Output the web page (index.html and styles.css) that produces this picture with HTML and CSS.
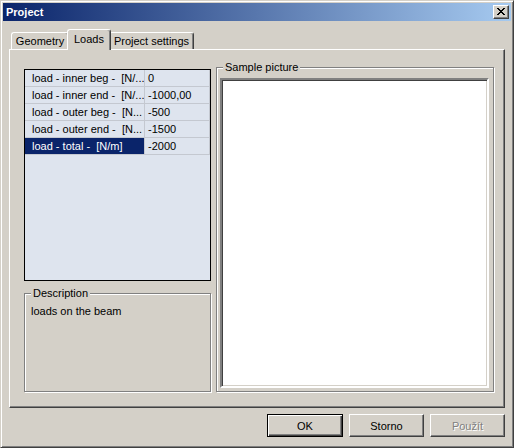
FILE: index.html
```html
<!DOCTYPE html>
<html>
<head>
<meta charset="utf-8">
<link rel="stylesheet" href="styles.css">
</head>
<body>
<div class="window">
  <div class="titlebar">
    <span class="title">Project</span>
    <div class="close">
      <svg width="8" height="7" viewBox="0 0 8 7" shape-rendering="crispEdges">
        <path fill="#000" d="M0 0h2v1H0zM6 0h2v1H6zM1 1h2v1H1zM5 1h2v1H5zM2 2h4v1H2zM3 3h2v1H3zM2 4h4v1H2zM1 5h2v1H1zM5 5h2v1H5zM0 6h2v1H0zM6 6h2v1H6z"/>
      </svg>
    </div>
  </div>
  <div class="body">
    <div class="tabs">
      <div class="tab t1">Geometry</div>
      <div class="tab t2 active">Loads</div>
      <div class="tab t3">Project settings</div>
    </div>
    <div class="panel">
      <div class="left">
        <div class="grid">
          <div class="row"><div class="name">load - inner beg -  [N/...</div><div class="val">0</div></div>
          <div class="row"><div class="name">load - inner end -  [N/...</div><div class="val">-1000,00</div></div>
          <div class="row"><div class="name">load - outer beg -  [N...</div><div class="val">-500</div></div>
          <div class="row"><div class="name">load - outer end -  [N...</div><div class="val">-1500</div></div>
          <div class="row sel"><div class="name">load - total -  [N/m]</div><div class="val">-2000</div></div>
        </div>
        <div class="group desc">
          <span class="legend">Description</span>
          <div class="desc-text">loads on the beam</div>
        </div>
      </div>
      <div class="group sample">
        <span class="legend">Sample picture</span>
        <div class="canvas"></div>
      </div>
    </div>
    <div class="buttons">
      <div class="btn default">OK</div>
      <div class="btn">Storno</div>
      <div class="btn disabled">Použít</div>
    </div>
  </div>
</div>
</body>
</html>
```
FILE: styles.css
```css
* { box-sizing: border-box; }
body {
  margin: 0;
  font-family: "Liberation Sans", Arial, sans-serif;
  font-size: 11px;
  color: #000;
  background: #d4d0c8;
}
.window {
  width: 514px;
  height: 448px;
  background: #d4d0c8;
  border: 1px solid;
  border-color: #d4d0c8 #404040 #404040 #d4d0c8;
  box-shadow: inset 1px 1px #fff, inset -1px -1px #808080;
  padding: 2px;
  display: flex;
  flex-direction: column;
}
.titlebar {
  height: 18px;
  flex: none;
  background: linear-gradient(to right, #0a246a, #a6caf0);
  display: flex;
  align-items: center;
  justify-content: space-between;
  padding: 0 2px 0 3px;
  color: #fff;
  font-weight: bold;
}
.close {
  width: 16px;
  height: 14px;
  background: #d4d0c8;
  border: 1px solid;
  border-color: #fff #404040 #404040 #fff;
  box-shadow: inset -1px -1px #808080;
  display: flex;
  align-items: center;
  justify-content: center;
  padding: 0 1px 1px 0;
}
.close svg { display: block; }
.body {
  flex: 1;
  display: flex;
  flex-direction: column;
  padding: 8px 6px 0 6px;
}
.tabs {
  display: flex;
  align-items: flex-end;
  height: 20px;
  padding-left: 2px;
  position: relative;
  z-index: 1;
}
.tab {
  height: 17px;
  border: 1px solid;
  border-bottom: none;
  border-color: #fff #404040 #fff #fff;
  box-shadow: inset -1px 0 #808080;
  border-radius: 3px 3px 0 0;
  display: flex;
  align-items: center;
  justify-content: center;
  background: #d4d0c8;
  white-space: nowrap;
}
.t1 { width: 58px; }
.t2 { width: 44px; }
.t3 { width: 85px; }
.tab.active {
  height: 21px;
  margin: 0 -2px -1px;
  position: relative;
  z-index: 2;
  padding-bottom: 2px;
}
.panel {
  height: 359px;
  border: 1px solid;
  border-color: #fff #404040 #404040 #fff;
  box-shadow: inset -1px -1px #808080;
  display: flex;
  padding: 18px 10px 0 14px;
  gap: 5px;
}
.left {
  width: 187px;
  display: flex;
  flex-direction: column;
  gap: 12px;
  margin-top: 1px;
}
.grid {
  height: 212px;
  border: 1px solid #000;
  background: #dee4ee;
}
.row {
  display: flex;
  height: 17px;
  border-bottom: 1px solid #c4c8d0;
  line-height: 16px;
  white-space: pre;
}
.name {
  width: 120px;
  border-right: 1px solid #c4c8d0;
  padding-left: 7px;
  overflow: hidden;
}
.val {
  flex: 1;
  padding-left: 3px;
  border-right: 1px solid #c4c8d0;
}
.row.sel .name {
  background: #0a246a;
  color: #fff;
}
.group {
  position: relative;
  border: 1px solid #808080;
  box-shadow: inset 1px 1px #fff, 1px 1px #fff;
}
.legend {
  position: absolute;
  top: -7px;
  left: 6px;
  padding: 0 2px;
  background: #d4d0c8;
  line-height: 13px;
}
.desc {
  height: 99px;
  padding: 11px 6px 0 6px;
}
.desc-text { line-height: 13px; }
.sample {
  width: 278px;
  height: 325px;
  margin-top: -1px;
  padding: 10px 0 0 3px;
}
.canvas {
  width: 269px;
  height: 310px;
  background: #fff;
  border: 2px solid;
  border-color: #808080 #fff #fff #808080;
  box-shadow: inset 1px 1px #404040, inset -1px -1px #d4d0c8;
}
.buttons {
  display: flex;
  justify-content: flex-end;
  gap: 6px;
  margin-top: 6px;
}
.btn {
  width: 75px;
  height: 23px;
  border: 1px solid;
  border-color: #fff #404040 #404040 #fff;
  box-shadow: inset -1px -1px #808080;
  display: flex;
  align-items: center;
  justify-content: center;
}
.btn.default {
  width: 76px;
  border: 1px solid #000;
  box-shadow: inset 1px 1px #fff, inset -1px -1px #404040, inset -2px -2px #808080;
}
.btn.disabled {
  color: #808080;
  text-shadow: 1px 1px #fff;
}
```
